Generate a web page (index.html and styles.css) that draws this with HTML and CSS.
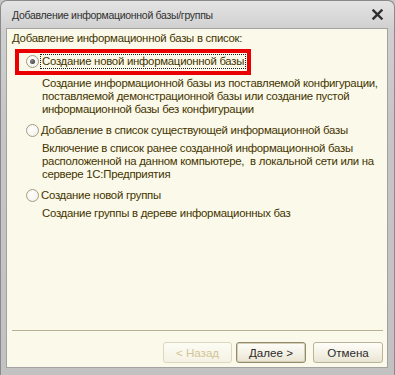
FILE: index.html
```html
<!DOCTYPE html>
<html lang="ru">
<head>
  <meta charset="UTF-8" />
  <title>Добавление информационной базы/группы</title>
  <link rel="stylesheet" href="styles.css">
</head>
<body>
  <div class="window">
    <div class="titlebar">
      <span class="title">Добавление информационной базы/группы</span>
      <span class="close">
        <svg width="11" height="11" viewBox="0 0 11 11">
          <path d="M1.5 1.5 L9.5 9.5 M9.5 1.5 L1.5 9.5" stroke="#2e2e2e" stroke-width="2.4" stroke-linecap="square" fill="none"/>
        </svg>
      </span>
    </div>
    <div class="client">
      <div class="heading">Добавление информационной базы в список:</div>
      <div class="options">
        <div class="option first">
          <div class="choice highlight">
            <span class="radio checked"></span>
            <span class="label focus">Создание новой информационной базы</span>
          </div>
          <div class="desc">
            Создание информационной базы из поставляемой конфигурации,<br>
            поставляемой демонстрационной базы или создание пустой<br>
            информационной базы без конфигурации
          </div>
        </div>
        <div class="option">
          <div class="choice">
            <span class="radio"></span>
            <span class="label">Добавление в список существующей информационной базы</span>
          </div>
          <div class="desc">
            Включение в список ранее созданной информационной базы<br>
            расположенной на данном компьютере,&nbsp; в локальной сети или на<br>
            сервере 1С:Предприятия
          </div>
        </div>
        <div class="option">
          <div class="choice">
            <span class="radio"></span>
            <span class="label">Создание новой группы</span>
          </div>
          <div class="desc">
            Создание группы в дереве информационных баз
          </div>
        </div>
      </div>
      <div class="footer">
        <div class="separator"></div>
        <div class="buttons">
          <button class="btn back" disabled>&lt; Назад</button>
          <button class="btn next">Далее &gt;</button>
          <button class="btn cancel">Отмена</button>
        </div>
      </div>
    </div>
  </div>
</body>
</html>
```

FILE: styles.css
```css
body {
  margin: 0;
  background: #c6c6c6;
  font-family: 'Liberation Sans', Arial, sans-serif;
  font-size: 11.4px;
}
.window {
  width: 395px;
  height: 375px;
  box-sizing: border-box;
  display: flex;
  flex-direction: column;
  background: linear-gradient(#e4e4e4, #d0d0d0 28px, #c6c6c6 120px, #c2c2c2);
  border: 1px solid #8a8a8a;
  border-bottom: none;
  border-radius: 7px 7px 0 0;
  padding: 0 6px 7px 5px;
}
.titlebar {
  height: 27px;
  display: flex;
  align-items: center;
  justify-content: space-between;
  padding: 0 5px 0 6px;
}
.title {
  font-size: 10.5px;
  letter-spacing: -0.3px;
  color: #303030;
  white-space: nowrap;
}
.close {
  display: flex;
}
.client {
  flex: 1;
  display: flex;
  flex-direction: column;
  background: #fbf9ea;
  border: 1px solid #a2a2a2;
  color: #433400;
  line-height: 13px;
  letter-spacing: -0.27px;
  white-space: nowrap;
}
.heading {
  padding: 3px 0 0 5px;
}
.options {
  margin-top: 9px;
  padding-left: 19px;
}
.option {
  margin-bottom: 7px;
}
.choice {
  position: relative;
  display: inline-flex;
  align-items: center;
  height: 15px;
}
.highlight::after {
  content: "";
  position: absolute;
  left: -11px;
  right: -6px;
  top: -5px;
  bottom: -6px;
  border: 4px solid #ea0000;
}
.radio {
  position: relative;
  width: 13px;
  height: 13px;
  box-sizing: border-box;
  border: 1px solid #a49d80;
  border-radius: 50%;
  background: radial-gradient(circle at 40% 35%, #ffffff, #f1efe6);
  margin-right: 2px;
}
.radio.checked::after {
  content: "";
  position: absolute;
  left: 3px;
  top: 3px;
  width: 5px;
  height: 5px;
  border-radius: 50%;
  background: radial-gradient(circle at 35% 35%, #8a8a8a, #2e2e2e);
}
.label.focus {
  outline: 1px dotted #1a1a1a;
  padding: 0 1px;
}
.desc {
  margin-top: 2px;
  padding-left: 16px;
}
.option.first .desc {
  margin-top: 6px;
}
.footer {
  margin-top: auto;
}
.separator {
  height: 1px;
  background: #b8b197;
  margin: 0 4px 0 5px;
}
.buttons {
  display: flex;
  justify-content: flex-end;
  gap: 4px;
  padding: 11px 4px 4px 0;
}
.btn {
  height: 21px;
  width: 70px;
  box-sizing: border-box;
  border: 1px solid #bab397;
  border-radius: 3px;
  background: linear-gradient(#fefdf8, #f3f0e3 60%, #e9e5d3);
  font-family: 'Liberation Sans', Arial, sans-serif;
  font-size: 11.6px;
  color: #2b2b2b;
  padding: 0;
}
.btn.back {
  width: 69px;
  color: #d3c498;
  border-color: #ddd7c1;
  background: linear-gradient(#fdfcf4, #f5f2e4);
}
.btn.next {
  border-color: #8f8a70;
  box-shadow: inset 0 0 0 1px #d6cfb3;
}
.btn.cancel {
  margin-left: 3px;
}
```
